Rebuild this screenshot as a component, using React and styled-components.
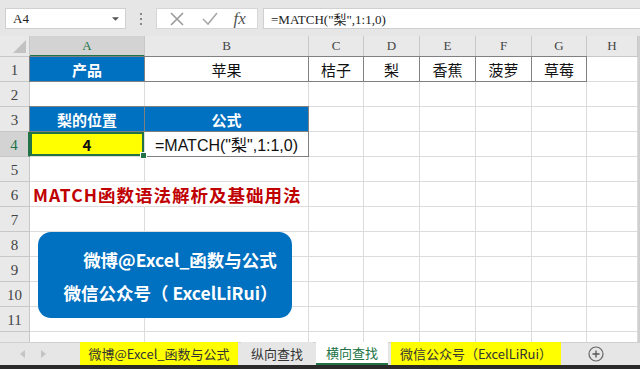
import React from 'react'
import styled, { createGlobalStyle, css } from 'styled-components'

const GlobalStyle = createGlobalStyle`
  html, body {
    margin: 0;
    padding: 0;
    width: 640px;
    height: 369px;
    overflow: hidden;
    background: #ffffff;
    font-family: "Noto Sans CJK SC", "Liberation Sans", sans-serif;
  }
`

const COLS = ['A', 'B', 'C', 'D', 'E', 'F', 'G', 'H']
const SERIF = `"Liberation Serif", "Noto Sans CJK SC", serif`

// sheet content, keyed by row number then column letter
const cells = {
  1: {
    A: { text: '产品', fill: '#0070c0', color: '#fff', bold: true, boxed: true },
    B: { text: '苹果', boxed: true },
    C: { text: '桔子', boxed: true },
    D: { text: '梨', boxed: true },
    E: { text: '香蕉', boxed: true },
    F: { text: '菠萝', boxed: true },
    G: { text: '草莓', boxed: true },
  },
  3: {
    A: { text: '梨的位置', fill: '#0070c0', color: '#fff', bold: true, boxed: true },
    B: { text: '公式', fill: '#0070c0', color: '#fff', bold: true, boxed: true },
  },
  4: {
    A: { text: '4', fill: '#ffff00', bold: true, selected: true },
    B: { text: '=MATCH("梨",1:1,0)', boxed: true, latin: true },
  },
  6: {
    A: { text: 'MATCH函数语法解析及基础用法', color: '#c00000', bold: true, spill: true },
  },
}

const App = () => {
  const rows = Array.from({ length: 12 }, (_, i) => i + 1)

  return (
    <Screen>
      <GlobalStyle />

      <TopBar>
        <NameBox>
          A4
          <Caret viewBox="0 0 8 4"><path d="M0 0h8L4 4z" fill="#555" /></Caret>
        </NameBox>
        <Grip>
          <span /><span /><span />
        </Grip>
        <FxButtons>
          <svg width="18" height="18" viewBox="0 0 18 18">
            <path d="M3 3l12 12M15 3L3 15" stroke="#9a9a9a" strokeWidth="1.6" fill="none" />
          </svg>
          <svg width="18" height="18" viewBox="0 0 18 18">
            <path d="M2 9l5 5 9-11" stroke="#a8a8a8" strokeWidth="1.6" fill="none" />
          </svg>
          <FxText>fx</FxText>
        </FxButtons>
        <FormulaInput>=MATCH("梨",1:1,0)</FormulaInput>
      </TopBar>

      <Sheet>
        <Grid>
          <Corner><CornerTriangle /></Corner>
          {COLS.map(c => (
            <ColHead key={c} $active={c === 'A'}>{c}</ColHead>
          ))}

          {rows.map(r => (
            <React.Fragment key={r}>
              <RowHead $active={r === 4}>{r < 12 ? r : ''}</RowHead>
              {COLS.map(c => {
                const cell = (cells[r] && cells[r][c]) || {}
                return (
                  <Cell
                    key={c}
                    $fill={cell.fill}
                    $color={cell.color}
                    $bold={cell.bold}
                    $boxed={cell.boxed}
                    $selected={cell.selected}
                    $spill={cell.spill}
                    $latin={cell.latin}
                  >
                    {cell.text}
                    {cell.selected && <FillHandle />}
                  </Cell>
                )
              })}
            </React.Fragment>
          ))}
        </Grid>

        <Badge>
          <BadgeLine $shift={30}>微博@Excel_函数与公式</BadgeLine>
          <BadgeLine $shift={11}>微信公众号（ ExcelLiRui）</BadgeLine>
        </Badge>
      </Sheet>

      <TabBar>
        <TabNav>
          <svg width="6" height="8" viewBox="0 0 6 8"><path d="M5 0v8L0 4z" fill="#c4c4c4" /></svg>
          <svg width="6" height="8" viewBox="0 0 6 8"><path d="M1 0v8l5-4z" fill="#c4c4c4" /></svg>
        </TabNav>
        <Tab $fill="#ffff00" $width={158}>微博@Excel_函数与公式</Tab>
        <Tab $width={72}>纵向查找</Tab>
        <Tab $active $width={72}>横向查找</Tab>
        <Tab $fill="#ffff00" $width={170}>微信公众号（ExcelLiRui）</Tab>
        <AddSheet>
          <svg width="16" height="16" viewBox="0 0 16 16">
            <circle cx="8" cy="8" r="7" stroke="#666" strokeWidth="1.2" fill="none" />
            <path d="M8 4.5v7M4.5 8h7" stroke="#555" strokeWidth="1.3" />
          </svg>
        </AddSheet>
      </TabBar>
      <BottomStrip />
    </Screen>
  )
}

const Screen = styled.div`
  width: 640px;
  height: 369px;
  display: flex;
  flex-direction: column;
  background: #fff;
  overflow: hidden;
`

const TopBar = styled.div`
  height: 36px;
  box-sizing: border-box;
  padding: 8px 0 7px 5px;
  background: #e6e6e6;
  display: flex;
  align-items: stretch;
`

const NameBox = styled.div`
  width: 121px;
  box-sizing: border-box;
  background: #fff;
  border: 1px solid #d0d0d0;
  display: flex;
  align-items: center;
  justify-content: space-between;
  padding: 0 6px 0 7px;
  font-family: ${SERIF};
  font-size: 13px;
  color: #222;
`

const Caret = styled.svg`
  width: 7px;
  height: 4px;
`

const Grip = styled.div`
  width: 30px;
  display: flex;
  flex-direction: column;
  align-items: center;
  justify-content: center;
  gap: 3px;

  span {
    width: 2px;
    height: 2px;
    background: #888;
  }
`

const FxButtons = styled.div`
  width: 102px;
  box-sizing: border-box;
  background: #fff;
  border: 1px solid #d6d6d6;
  display: flex;
  align-items: center;
  justify-content: space-around;
  padding: 0 4px;
`

const FxText = styled.span`
  font-family: ${SERIF};
  font-style: italic;
  font-size: 17px;
  color: #555;
`

const FormulaInput = styled.div`
  flex: 1;
  margin-left: 5px;
  background: #fff;
  border: 1px solid #d0d0d0;
  border-right: none;
  display: flex;
  align-items: center;
  padding-left: 7px;
  font-family: ${SERIF};
  font-size: 13px;
  color: #222;
`

const Sheet = styled.div`
  position: relative;
  flex: 1;
  overflow: hidden;
  border-right: 2px solid #cfcfcf;
`

const Grid = styled.div`
  display: grid;
  grid-template-columns: 30px 115px 164px 55px 56px 56px 56px 55px 1fr;
  grid-template-rows: 21px;
  grid-auto-rows: 25px;
`

const headCell = css`
  box-sizing: border-box;
  background: #e9e9e9;
  color: #444;
  font-family: ${SERIF};
  display: flex;
  align-items: center;
  justify-content: center;
`

const Corner = styled.div`
  ${headCell};
  position: relative;
  border-right: 1px solid #c8c8c8;
  border-bottom: 1px solid #c8c8c8;
`

const CornerTriangle = styled.div`
  position: absolute;
  right: 3px;
  bottom: 3px;
  width: 0;
  height: 0;
  border-left: 13px solid transparent;
  border-bottom: 13px solid #c2c2c2;
`

const ColHead = styled.div`
  ${headCell};
  font-size: 13px;
  border-right: 1px solid #c8c8c8;
  border-bottom: ${p => (p.$active ? '2px solid #217346' : '1px solid #c8c8c8')};
  background: ${p => (p.$active ? '#d3d3d3' : '#e9e9e9')};
  color: ${p => (p.$active ? '#217346' : '#444')};
`

const RowHead = styled.div`
  ${headCell};
  font-size: 15px;
  padding-top: 3px;
  border-bottom: 1px solid #c8c8c8;
  border-right: ${p => (p.$active ? '2px solid #217346' : '1px solid #c8c8c8')};
  background: ${p => (p.$active ? '#d3d3d3' : '#e9e9e9')};
  color: ${p => (p.$active ? '#217346' : '#444')};
`

const Cell = styled.div`
  position: relative;
  box-sizing: border-box;
  display: flex;
  align-items: center;
  justify-content: ${p => (p.$spill ? 'flex-start' : 'center')};
  padding-left: ${p => (p.$spill ? '3px' : '0')};
  white-space: nowrap;
  overflow: visible;
  z-index: ${p => (p.$spill || p.$selected ? 2 : 1)};
  background: ${p => p.$fill || '#fff'};
  color: ${p => p.$color || '#111'};
  font-weight: ${p => (p.$bold ? 700 : 400)};
  font-size: ${p => (p.$spill ? '17.5px' : p.$latin ? '16px' : '15px')};
  font-family: ${p => (p.$latin ? `"Liberation Sans", "Noto Sans CJK SC", sans-serif` : `"Noto Sans CJK SC", "Liberation Sans", sans-serif`)};
  border-right: 1px solid ${p => (p.$spill ? 'transparent' : '#dcdcdc')};
  border-bottom: 1px solid #dcdcdc;
  ${p => p.$spill && css`
    background: transparent;
    letter-spacing: 1px;
  `}
  ${p => p.$boxed && css`
    box-shadow: inset 0 0 0 1px #808080;
    margin: -1px 0 0 -1px;
    width: calc(100% + 1px);
    height: calc(100% + 1px);
    border: none;
  `}
  ${p => p.$selected && css`
    box-shadow: inset 0 0 0 2px #217346;
  `}
`

const FillHandle = styled.span`
  position: absolute;
  right: -3px;
  bottom: -3px;
  width: 5px;
  height: 5px;
  background: #217346;
  border: 1px solid #fff;
`

const Badge = styled.div`
  position: absolute;
  left: 38px;
  top: 196px;
  width: 254px;
  height: 86px;
  box-sizing: border-box;
  border-radius: 13px;
  background: #0070c0;
  display: flex;
  flex-direction: column;
  align-items: center;
  justify-content: center;
  gap: 9px;
  z-index: 3;
  padding-top: 2px;
`

const BadgeLine = styled.div`
  color: #fff;
  font-weight: 700;
  font-size: 17.5px;
  line-height: 24px;
  white-space: nowrap;
  margin-left: ${p => p.$shift}px;
`

const TabBar = styled.div`
  height: 22px;
  background: #e6e6e6;
  display: flex;
  align-items: stretch;
  border-top: 1px solid #d0d0d0;
`

const TabNav = styled.div`
  width: 80px;
  display: flex;
  align-items: center;
  justify-content: center;
  gap: 14px;
  padding-right: 14px;
  box-sizing: border-box;
`

const Tab = styled.div`
  width: ${p => p.$width}px;
  box-sizing: border-box;
  margin-right: 3px;
  display: flex;
  align-items: center;
  justify-content: center;
  white-space: nowrap;
  font-size: 13px;
  color: ${p => (p.$active ? '#217346' : '#333')};
  background: ${p => p.$fill || (p.$active ? '#fff' : '#e6e6e6')};
  border-bottom: ${p => (p.$active ? '2px solid #217346' : 'none')};
  margin-top: -1px;
`

const AddSheet = styled.div`
  margin-left: 24px;
  display: flex;
  align-items: center;
`

const BottomStrip = styled.div`
  height: 4px;
  background: #2a2a2a;
`

export default App
